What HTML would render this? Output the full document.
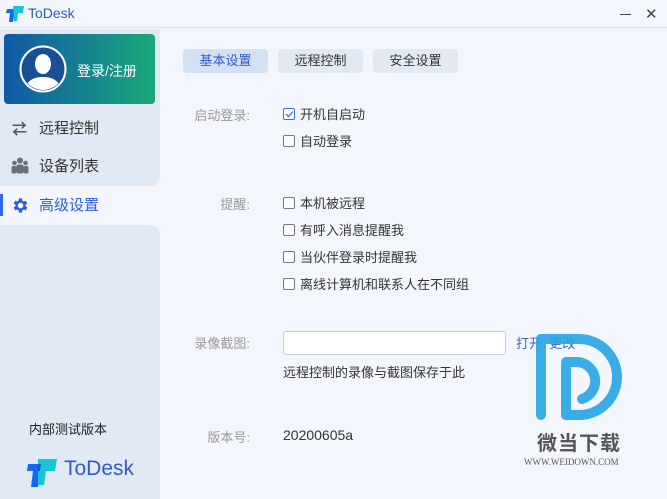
<!DOCTYPE html>
<html><head><meta charset="utf-8"><style>
*{margin:0;padding:0;box-sizing:border-box}
body{width:667px;height:499px;background:#f3f7fd;font-family:"Liberation Sans","Noto Sans CJK SC",sans-serif;position:relative;overflow:hidden;color:#333}
.abs{position:absolute}
.title{left:0;top:0;width:667px;height:28px;border-bottom:1px solid #dde4ee;background:#f3f7fd}
.side1{left:0;top:29px;width:160px;height:157px;background:#e1eaf4;border-radius:0 0 10px 0}
.side2{left:0;top:225px;width:160px;height:274px;background:#e1eaf4;border-radius:0 10px 0 0}
.login{left:4px;top:34px;width:151px;height:70px;border-radius:4px;background:linear-gradient(90deg,#1158a6,#1aa87a)}
.nav{left:39px;font-size:15px;color:#333}
.tab{top:49px;height:24px;border-radius:4px;background:#e1eaf4;font-size:13px;text-align:center;line-height:24px;color:#333}
.lbl{font-size:13px;color:#999;width:80px;text-align:right;left:170px}
.cb{left:283px;width:12px;height:12px;border:1px solid #777;border-radius:2px;background:#fff}
.ct{left:300px;font-size:13px;color:#333}
</style></head><body>
<div class="abs title"></div>
<svg class="abs" style="left:6px;top:5px" width="20" height="18" viewBox="0 0 20 18"><path d="M1 4h8l-2 13H3l1-9H0z" fill="#1367f0"/><path d="M7 1h11l-1 7h-5l-1 8H8z" fill="#16c6d6"/></svg>
<div class="abs" style="left:28px;top:5px;font-size:14px;color:#2e58b8">ToDesk</div>
<div class="abs" style="left:620px;top:14px;width:11px;height:1px;background:#444"></div>
<div class="abs" style="left:645px;top:5px;font-size:15px;color:#444">✕</div>
<div class="abs side1"></div>
<div class="abs side2"></div>
<div class="abs login"></div>
<svg class="abs" style="left:19px;top:45px" width="48" height="48" viewBox="0 0 48 48"><circle cx="24" cy="24" r="22.5" fill="#1a4f98" stroke="#fff" stroke-width="2"/><clipPath id="c"><circle cx="24" cy="24" r="21"/></clipPath><g clip-path="url(#c)" fill="#fff"><ellipse cx="24" cy="19" rx="8" ry="10"/><path d="M6 48c0-12 8-16 18-16s18 4 18 16z"/></g></svg>
<div class="abs" style="left:77px;top:61px;font-size:14px;color:#fff">登录/注册</div>
<div class="abs" style="left:12px;top:118px;font-size:15px;color:#555;font-weight:bold">⇄</div>
<div class="abs nav" style="top:117px">远程控制</div>
<svg class="abs" style="left:11px;top:157px" width="18" height="17" viewBox="0 0 18 17" fill="#6a6f78"><circle cx="9" cy="3.5" r="3"/><circle cx="3.5" cy="6" r="2.3"/><circle cx="14.5" cy="6" r="2.3"/><rect x="5.5" y="7.5" width="7" height="9" rx="2"/><rect x="0.5" y="9" width="5" height="7.5" rx="1.5"/><rect x="12.5" y="9" width="5" height="7.5" rx="1.5"/></svg>
<div class="abs nav" style="top:155px">设备列表</div>
<div class="abs" style="left:0;top:194px;width:3px;height:22px;background:#2a6af0"></div>
<svg class="abs" style="left:11px;top:196px" width="19" height="19" viewBox="0 0 24 24"><path fill="#2a5fe0" d="M19.4 13a7.5 7.5 0 000-2l2.1-1.6-2-3.5-2.5 1a7.6 7.6 0 00-1.7-1L15 3h-4l-.4 2.9a7.6 7.6 0 00-1.7 1l-2.5-1-2 3.5L6.6 11a7.5 7.5 0 000 2l-2.2 1.6 2 3.5 2.5-1c.5.4 1.1.8 1.7 1L11 21h4l.4-2.9c.6-.2 1.2-.6 1.7-1l2.5 1 2-3.5zM13 15.5a3.5 3.5 0 110-7 3.5 3.5 0 010 7z" transform="translate(-1 0)"/></svg>
<div class="abs nav" style="top:194px;color:#2a5fe0">高级设置</div>
<div class="abs" style="left:29px;top:419px;font-size:13px;color:#222">内部测试版本</div>
<svg class="abs" style="left:26px;top:458px" width="32" height="30" viewBox="0 0 32 30"><path d="M2 6h13l-3 23H5l2-16H1z" fill="#1367f0"/><path d="M12 1h19l-2 12h-9l-2 14h-6z" fill="#16c6d6"/><path d="M12 6h3l-1 7h-2z" fill="#1255d0"/></svg>
<div class="abs" style="left:64px;top:457px;font-size:21px;color:#2f5bc8">ToDesk</div>
<div class="abs tab" style="left:183px;width:85px;background:#d2e2f4;color:#2f5bc8">基本设置</div>
<div class="abs tab" style="left:278px;width:85px">远程控制</div>
<div class="abs tab" style="left:373px;width:85px">安全设置</div>
<div class="abs lbl" style="top:105px">启动登录:</div>
<div class="abs cb" style="top:108px;border-color:#3a6fd8"></div>
<svg class="abs" style="left:285px;top:110px" width="9" height="8" viewBox="0 0 9 8"><path d="M1 4l2.5 2.5L8 1.5" stroke="#3a6fd8" stroke-width="1.3" fill="none"/></svg>
<div class="abs ct" style="top:104px">开机自启动</div>
<div class="abs cb" style="top:135px"></div><div class="abs ct" style="top:131px">自动登录</div>
<div class="abs lbl" style="top:194px">提醒:</div>
<div class="abs cb" style="top:197px"></div><div class="abs ct" style="top:193px">本机被远程</div>
<div class="abs cb" style="top:224px"></div><div class="abs ct" style="top:220px">有呼入消息提醒我</div>
<div class="abs cb" style="top:251px"></div><div class="abs ct" style="top:247px">当伙伴登录时提醒我</div>
<div class="abs cb" style="top:278px"></div><div class="abs ct" style="top:274px">离线计算机和联系人在不同组</div>
<div class="abs lbl" style="top:333px">录像截图:</div>
<div class="abs" style="left:283px;top:331px;width:223px;height:24px;border:1px solid #c6ccd6;border-radius:3px;background:#fff"></div>
<div class="abs" style="left:516px;top:333px;font-size:13px;color:#3a62c8">打开 &nbsp;更改</div>
<div class="abs" style="left:283px;top:362px;font-size:13px;color:#333">远程控制的录像与截图保存于此</div>
<div class="abs lbl" style="top:427px">版本号:</div>
<div class="abs" style="left:283px;top:427px;font-size:14px;color:#333">20200605a</div>
<svg class="abs" style="left:0;top:0;opacity:.9" width="667" height="499"><g stroke="#27a5e4" stroke-width="10" fill="none" stroke-linecap="round"><path d="M541 339V415"/><path d="M541 339H579A38 38 0 0 1 579 415H566"/><path d="M566 365V415"/><path d="M566 362H578A19 19 0 0 1 582 399"/></g></svg>
<div class="abs" style="left:537px;top:427px;font-size:20px;font-weight:bold;color:#555;letter-spacing:1px">微当下载</div>
<div class="abs" style="left:524px;top:457px;font-size:9px;font-family:'Liberation Serif',serif;color:#555">WWW.WEIDOWN.COM</div>
</body></html>
